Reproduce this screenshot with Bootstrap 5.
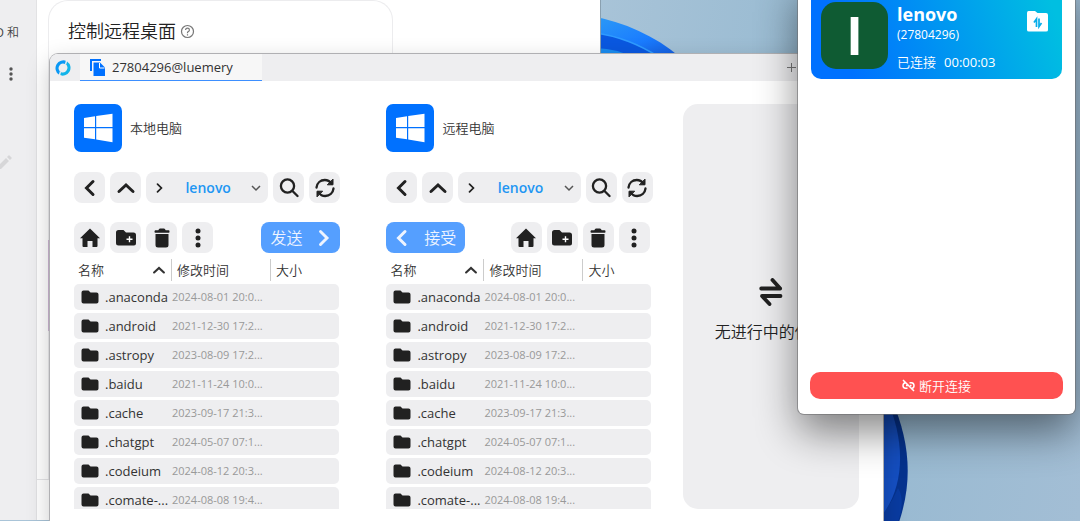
<!DOCTYPE html>
<html lang="zh-CN">
<head>
<meta charset="utf-8">
<meta name="viewport" content="width=device-width, initial-scale=1">
<title>27804296@luemery</title>
<link href="https://cdn.jsdelivr.net/npm/bootstrap@5.3.0/dist/css/bootstrap.min.css" rel="stylesheet">
<style>
  :root { --ink: #212121; --soft: #eeeef0; --brand: #0071ff; }
  body { font-family: "Open Sans", "Noto Sans CJK SC DemiLight", "Noto Sans CJK SC", sans-serif; font-size: 13px; line-height: 20px; color: #333; overflow: hidden; }
  button { font-family: inherit; }
  svg { display: block; flex: none; }
  .desktop { height: 100vh; background: linear-gradient(100deg, #a9c4d8 50%, #94b8d0 75%, #a3bed5 100%); }
  .wallpaper { position: absolute; inset: 0; width: 100%; height: 100%; }

  /* windows on the desktop */
  .win { position: absolute; background: #fff; }
  .win-home { left: 0; top: 0; bottom: 1px; width: 601px; border-right: 1px solid #8aa0b0; }
  .win-files { left: 50px; right: 197px; top: 54px; bottom: -12px; border-radius: 8px 8px 0 0; box-shadow: 0 0 0 1px #b0b0b3, 0 8px 24px rgba(0,0,0,.22); }
  .win-session { right: 5px; top: -20px; bottom: 107px; width: 277px; border-radius: 0 0 6px 6px; padding: 12px 12px 15px; box-shadow: 0 0 0 1px rgba(110,110,112,.6), 0 18px 42px rgba(0,0,0,.48); }

  .side { width: 37px; background: var(--soft); border-right: 1px solid #e2e2e4; padding-top: 23px; color: #444; }
  .side-text { width: 19px; direction: rtl; white-space: nowrap; overflow: hidden; font-size: 12px; }
  .side-pen { margin-top: 74px; margin-left: -2px; }
  .home-card { margin: 0 207px 0 11px; border: 1px solid #ececee; border-bottom: 0; border-radius: 20px 20px 0 0; padding: 18px 19px 0; }
  .home-title { font-size: 18px; line-height: 24px; font-weight: 400; color: #222; }
  .home-tile { height: 91px; margin: 197px -20px 0; background: #cdb6d2; }
  .home-foot { height: 41px; border-top: 1px solid #e4e4e6; }

  .tabs-bar { height: 27px; background: var(--soft); border-radius: 8px 8px 0 0; padding-left: 5px; }
  .tab-item { width: 182px; height: 27px; background: #f7f7f7; border: 0; border-bottom: 1px solid #3d8fff; padding: 0 10px; margin-left: 9px; gap: 7px; color: #333; }
  .tab-add { border: 0; background: none; padding: 0; margin-right: 87px; }
  .panes { display: grid; grid-template-columns: 3fr 3fr 2fr; min-height: 0; padding: 23px 0 24px; }
  .pane { padding: 0 22px 0 24px; min-width: 0; min-height: 0; overflow: hidden; }
  .os-tile { width: 48px; height: 48px; border-radius: 7px; background: var(--brand); }
  .tool { width: 31px; height: 31px; border: 0; border-radius: 8px; background: var(--soft); padding: 0; color: var(--ink); display: flex; align-items: center; justify-content: center; }
  .tools { gap: 5px; }
  .tools-nav { margin-top: 20px; }
  .tools-act { margin-top: 19px; }
  .tools-remote { padding-right: 3px; }
  .path-box { height: 31px; border-radius: 8px; background: var(--soft); padding: 0 7px; color: var(--ink); }
  .path-link { color: #2196f3; font-weight: 600; font-size: 14px; text-decoration: none; }
  .send { width: 79px; height: 31px; border: 0; border-radius: 8px; background: #559fff; color: #eef4ff; font-size: 16px; padding: 0 7px 0 9px; }
  .send-back { padding: 0 9px 0 6px; }

  .files { table-layout: fixed; width: 265px; border-collapse: separate; border-spacing: 0 3px; margin: 3px 0 0; }
  .files th { height: 22px; padding: 0 5px; font-weight: 400; border-left: 1px solid #ccc; color: #333; line-height: 20px; }
  .files th:first-child { border-left: 0; padding-left: 4px; }
  .files td { height: 26px; padding: 0; background: var(--soft); line-height: 20px; white-space: nowrap; }
  .files td:first-child { border-radius: 5px 0 0 5px; padding-left: 7px; }
  .files td:last-child { border-radius: 0 5px 5px 0; }
  .files .when { font-size: 11px; color: #999; padding-left: 1px; }
  .entry { gap: 6px; }
  .sort { border: 0; background: none; padding: 0; width: 100%; color: inherit; }
  .w-name { width: 97px; } .w-date { width: 99px; }

  .transfers { margin: 0 24px 0 8px; border-radius: 15px; background: var(--soft); font-size: 16px; line-height: 24px; color: #222; gap: 14px; padding-top: 8px; }

  .peer { height: 87px; border-radius: 0 0 10px 10px; margin: 0 1px; padding: 10px; background: linear-gradient(70deg, #0071ff 15%, #00bfe1 95%); color: #fff; }
  .avatar { width: 67px; height: 67px; border-radius: 15px; background: #0f5b33; font-size: 51px; line-height: 67px; font-weight: 700; }
  .peer-text { margin-left: 9px; }
  .peer-name { font-size: 18px; line-height: 24px; font-weight: 700; }
  .peer-id { font-size: 12px; line-height: 18px; }
  .peer-state { font-size: 13px; line-height: 20px; margin-top: 8px; }
  .files-btn { border: 0; background: none; padding: 0; margin: 9px 4px 0 auto; }
  .hangup { height: 27px; border: 0; border-radius: 10px; background: #ff5151; color: #fff; }
</style>
</head>
<body>
<svg class="d-none">
  <symbol id="i-win" viewBox="0 0 30 30"><path fill="#fff" d="M1 5 12 3.300V14H1zM13.200 3.100 29.500.7V14H13.200zM1 15.300H12V26.200L1 24.700zM13.200 15.300H29.500V29.200L13.200 26.500z"/></symbol>
  <symbol id="i-left" viewBox="0 0 20 20"><path d="M13 3.500 6.500 10l6.500 6.500" fill="none" stroke="currentColor" stroke-width="3" stroke-linecap="round"/></symbol>
  <symbol id="i-right" viewBox="0 0 20 20"><path d="m7.500 3.500 6.500 6.500-6.500 6.500" fill="none" stroke="currentColor" stroke-width="2.900" stroke-linecap="round"/></symbol>
  <symbol id="i-up" viewBox="0 0 20 20"><path d="m3 13.500 7-6.500 7 6.500" fill="none" stroke="currentColor" stroke-width="3" stroke-linecap="round"/></symbol>
  <symbol id="i-down" viewBox="0 0 10 10"><path d="m1 3 4 4 4-4" fill="none" stroke="#555" stroke-width="1.500"/></symbol>
  <symbol id="i-search" viewBox="0 0 20 20"><g fill="none" stroke="currentColor" stroke-width="2.300" stroke-linecap="round"><circle cx="8.500" cy="8" r="6.600"/><path d="m13.500 13 5 5"/></g></symbol>
  <symbol id="i-sync" viewBox="0 0 20 20"><g fill="none" stroke="currentColor" stroke-width="2.300" stroke-linecap="round" stroke-linejoin="round"><path d="M1.500 9.500C2 5 5.500 2 9.800 2c3 0 5 1.300 6.700 3.700M18.500 10.500C18 15 14.500 18 10.200 18c-3 0-5-1.300-6.700-3.700"/><path d="M18 1.500v5.300h-5.300zM2 18.500v-5.300h5.300z" fill="currentColor" stroke-width="1"/></g></symbol>
  <symbol id="i-home" viewBox="0 0 20 20"><path fill="currentColor" d="M10 .5 20 10.200h-2.500V18q0 1-1 1h-4v-6h-5v6h-4q-1 0-1-1v-7.800H0z"/></symbol>
  <symbol id="i-newdir" viewBox="0 0 20 16"><path fill="currentColor" d="M2.500 0h5l2.500 2.500h7.500Q20 2.500 20 5v8.500q0 2-2 2H2.500q-2.500 0-2.500-2.500V2.500Q0 0 2.500 0z"/><path d="M13.500 6.300v6M10.500 9.300h6" stroke="#fff" stroke-width="1.400"/></symbol>
  <symbol id="i-trash" viewBox="0 0 16 20"><path fill="currentColor" d="M1.300 2.200h3Q5 .5 6 .5h4q1 0 1.700 1.700h3q.8 0 .8 1.400t-.8 1.200H1.300q-.8 0-.8-1.200t.8-1.400zM1.500 6h13v11q0 2.500-2.500 2.500H4q-2.500 0-2.500-2.500z"/></symbol>
  <symbol id="i-dots" viewBox="0 0 6 20"><g fill="currentColor"><circle cx="3" cy="3" r="2.500"/><circle cx="3" cy="10" r="2.500"/><circle cx="3" cy="17" r="2.500"/></g></symbol>
  <symbol id="i-dir" viewBox="0 0 18 14"><path fill="#212121" d="M2.500.5h5L9.500 2.500H15.500q2 0 2 2V11.500q0 2-2 2H2.500q-2 0-2-2V2.500q0-2 2-2z"/></symbol>
</svg>

<main class="desktop position-relative overflow-hidden">
  <svg class="wallpaper" viewBox="0 0 1080 521" preserveAspectRatio="none" aria-hidden="true">
    <defs><linearGradient id="petal" x1="0" y1="0" x2="1" y2="1"><stop offset="0" stop-color="#2d9cf5"/><stop offset=".6" stop-color="#1a7cff"/><stop offset="1" stop-color="#1458d8"/></linearGradient></defs>
    <path fill="url(#petal)" d="M590 16C625 22 655 36 680 57H590z"/>
    <path fill="#0a58e0" d="M590 32C620 36 640 45 659 57H590z"/>
    <path d="M590 32C620 36 640 45 659 57" fill="none" stroke="#2f9bff" stroke-width="1.500"/>
    <path fill="#1b8cf0" d="M590 48C605 48 620 50 632 57H590z"/>
    <path fill="#06338f" d="M880 400h12C909 440 914 480 898 525H880z"/>
    <path fill="#1550c4" d="M880 400h7C905 440 906 487 880 518z"/>
    <path fill="#0c44b4" d="M880 518Q892 503 898 488 906 500 897 525H880z" opacity=".5"/>
  </svg>

  <section class="win win-home d-flex">
    <aside class="side flex-shrink-0">
      <div class="side-text">ID 和</div>
      <svg class="ms-2 mt-4" width="6" height="14" viewBox="0 0 6 14" fill="#555"><circle cx="3" cy="2" r="1.700"/><circle cx="3" cy="7" r="1.700"/><circle cx="3" cy="12" r="1.700"/></svg>
      <svg class="side-pen" width="14" height="14" viewBox="0 0 14 14" fill="#d6d6d8"><path d="M0 11 8 3l3 3-8 8H0zM9 2l1.500-1.500q.5-.5 1 0l2 2q.5.500 0 1L12 5z"/></svg>
    </aside>
    <div class="flex-grow-1 d-flex flex-column">
      <div class="home-card flex-grow-1">
        <h1 class="home-title d-flex align-items-center gap-1 mb-0">控制远程桌面
          <svg width="15" height="15" viewBox="0 0 15 15" fill="none" stroke="#777" stroke-width="1.200"><circle cx="7.500" cy="7.500" r="6"/><path d="M5.600 6.100q0-2 1.900-2t1.900 1.800q0 1-1.100 1.700t-.8 1.600M7.500 10.300v1.300"/></svg>
        </h1>
        <div class="home-tile"></div>
      </div>
      <div class="home-foot"></div>
    </div>
  </section>

  <section class="win win-files d-flex flex-column">
    <header class="tabs-bar d-flex align-items-center flex-shrink-0">
      <svg width="16" height="16" viewBox="0 0 16 16" fill="none" stroke-width="3.200"><path d="M4.800 13.300A6.200 6.200 0 0 1 11 2.600" stroke="#0a98f5"/><path d="M11.200 2.700A6.200 6.200 0 0 1 5 13.400" stroke="#12b4ea"/><path d="m11.500.5-.9 4M4.500 15.500l.9-4" stroke="#eeeef0" stroke-width="1.300"/></svg>
      <button class="tab-item d-flex align-items-center" type="button">
        <svg width="15" height="17" viewBox="0 0 15 17" fill="#0071ff"><path d="M0 0h11v2H2v10H0z"/><path d="M3.500 3.500H10l5 5V17H3.500z"/><path d="M9.500 4v5h5" fill="none" stroke="#fff"/></svg>
        <span>27804296@luemery</span>
      </button>
      <button class="tab-add ms-auto" type="button" aria-label="+"><svg width="9" height="9" viewBox="0 0 9 9" stroke="#777"><path d="M4.500 0v9M0 4.500h9"/></svg></button>
    </header>

    <div class="panes flex-grow-1">
      <section class="pane">
        <div class="d-flex align-items-center gap-2"><span class="os-tile d-flex align-items-center justify-content-center"><svg width="30" height="30"><use href="#i-win"/></svg></span><span>本地电脑</span></div>
        <nav class="tools tools-nav d-flex">
          <button class="tool" type="button"><svg width="20" height="20"><use href="#i-left"/></svg></button>
          <button class="tool" type="button"><svg width="20" height="20"><use href="#i-up"/></svg></button>
          <div class="path-box d-flex align-items-center justify-content-between flex-grow-1"><svg width="12" height="12"><use href="#i-right"/></svg><a class="path-link" href="#">lenovo</a><svg width="10" height="10"><use href="#i-down"/></svg></div>
          <button class="tool" type="button"><svg width="20" height="20"><use href="#i-search"/></svg></button>
          <button class="tool" type="button"><svg width="20" height="20"><use href="#i-sync"/></svg></button>
        </nav>
        <div class="tools tools-act d-flex">
          <button class="tool" type="button"><svg width="20" height="20"><use href="#i-home"/></svg></button>
          <button class="tool" type="button"><svg width="20" height="16"><use href="#i-newdir"/></svg></button>
          <button class="tool" type="button"><svg width="16" height="20"><use href="#i-trash"/></svg></button>
          <button class="tool" type="button"><svg width="6" height="20"><use href="#i-dots"/></svg></button>
          <button class="send ms-auto d-flex align-items-center justify-content-between" type="button"><span>发送</span><svg width="20" height="20"><use href="#i-right"/></svg></button>
        </div>
        <table class="files">
          <thead><tr><th class="w-name"><button class="sort d-flex align-items-center justify-content-between" type="button">名称<svg width="14" height="14"><use href="#i-up"/></svg></button></th><th class="w-date">修改时间</th><th>大小</th></tr></thead>
          <tbody>
            <tr><td><span class="entry d-flex align-items-center"><svg width="18" height="14"><use href="#i-dir"/></svg>.anaconda</span></td><td class="when">2024-08-01 20:0...</td><td></td></tr>
            <tr><td><span class="entry d-flex align-items-center"><svg width="18" height="14"><use href="#i-dir"/></svg>.android</span></td><td class="when">2021-12-30 17:2...</td><td></td></tr>
            <tr><td><span class="entry d-flex align-items-center"><svg width="18" height="14"><use href="#i-dir"/></svg>.astropy</span></td><td class="when">2023-08-09 17:2...</td><td></td></tr>
            <tr><td><span class="entry d-flex align-items-center"><svg width="18" height="14"><use href="#i-dir"/></svg>.baidu</span></td><td class="when">2021-11-24 10:0...</td><td></td></tr>
            <tr><td><span class="entry d-flex align-items-center"><svg width="18" height="14"><use href="#i-dir"/></svg>.cache</span></td><td class="when">2023-09-17 21:3...</td><td></td></tr>
            <tr><td><span class="entry d-flex align-items-center"><svg width="18" height="14"><use href="#i-dir"/></svg>.chatgpt</span></td><td class="when">2024-05-07 07:1...</td><td></td></tr>
            <tr><td><span class="entry d-flex align-items-center"><svg width="18" height="14"><use href="#i-dir"/></svg>.codeium</span></td><td class="when">2024-08-12 20:3...</td><td></td></tr>
            <tr><td><span class="entry d-flex align-items-center"><svg width="18" height="14"><use href="#i-dir"/></svg>.comate-...</span></td><td class="when">2024-08-08 19:4...</td><td></td></tr>
          </tbody>
        </table>
      </section>

      <section class="pane">
        <div class="d-flex align-items-center gap-2"><span class="os-tile d-flex align-items-center justify-content-center"><svg width="30" height="30"><use href="#i-win"/></svg></span><span>远程电脑</span></div>
        <nav class="tools tools-nav d-flex">
          <button class="tool" type="button"><svg width="20" height="20"><use href="#i-left"/></svg></button>
          <button class="tool" type="button"><svg width="20" height="20"><use href="#i-up"/></svg></button>
          <div class="path-box d-flex align-items-center justify-content-between flex-grow-1"><svg width="12" height="12"><use href="#i-right"/></svg><a class="path-link" href="#">lenovo</a><svg width="10" height="10"><use href="#i-down"/></svg></div>
          <button class="tool" type="button"><svg width="20" height="20"><use href="#i-search"/></svg></button>
          <button class="tool" type="button"><svg width="20" height="20"><use href="#i-sync"/></svg></button>
        </nav>
        <div class="tools tools-act tools-remote d-flex">
          <button class="send send-back me-auto d-flex align-items-center justify-content-between" type="button"><svg width="20" height="20"><use href="#i-left"/></svg><span>接受</span></button>
          <button class="tool" type="button"><svg width="20" height="20"><use href="#i-home"/></svg></button>
          <button class="tool" type="button"><svg width="20" height="16"><use href="#i-newdir"/></svg></button>
          <button class="tool" type="button"><svg width="16" height="20"><use href="#i-trash"/></svg></button>
          <button class="tool" type="button"><svg width="6" height="20"><use href="#i-dots"/></svg></button>
        </div>
        <table class="files">
          <thead><tr><th class="w-name"><button class="sort d-flex align-items-center justify-content-between" type="button">名称<svg width="14" height="14"><use href="#i-up"/></svg></button></th><th class="w-date">修改时间</th><th>大小</th></tr></thead>
          <tbody>
            <tr><td><span class="entry d-flex align-items-center"><svg width="18" height="14"><use href="#i-dir"/></svg>.anaconda</span></td><td class="when">2024-08-01 20:0...</td><td></td></tr>
            <tr><td><span class="entry d-flex align-items-center"><svg width="18" height="14"><use href="#i-dir"/></svg>.android</span></td><td class="when">2021-12-30 17:2...</td><td></td></tr>
            <tr><td><span class="entry d-flex align-items-center"><svg width="18" height="14"><use href="#i-dir"/></svg>.astropy</span></td><td class="when">2023-08-09 17:2...</td><td></td></tr>
            <tr><td><span class="entry d-flex align-items-center"><svg width="18" height="14"><use href="#i-dir"/></svg>.baidu</span></td><td class="when">2021-11-24 10:0...</td><td></td></tr>
            <tr><td><span class="entry d-flex align-items-center"><svg width="18" height="14"><use href="#i-dir"/></svg>.cache</span></td><td class="when">2023-09-17 21:3...</td><td></td></tr>
            <tr><td><span class="entry d-flex align-items-center"><svg width="18" height="14"><use href="#i-dir"/></svg>.chatgpt</span></td><td class="when">2024-05-07 07:1...</td><td></td></tr>
            <tr><td><span class="entry d-flex align-items-center"><svg width="18" height="14"><use href="#i-dir"/></svg>.codeium</span></td><td class="when">2024-08-12 20:3...</td><td></td></tr>
            <tr><td><span class="entry d-flex align-items-center"><svg width="18" height="14"><use href="#i-dir"/></svg>.comate-...</span></td><td class="when">2024-08-08 19:4...</td><td></td></tr>
          </tbody>
        </table>
      </section>

      <section class="transfers d-flex flex-column align-items-center justify-content-center">
        <svg width="24" height="28" viewBox="0 0 24 28" fill="none" stroke="#212121" stroke-width="3.800" stroke-linecap="round" stroke-linejoin="round"><path d="M2.200 10.500h19L13.500 2M21.500 18H3l7.500 8"/></svg>
        <span>无进行中的传输</span>
      </section>
    </div>
  </section>

  <section class="win win-session d-flex flex-column justify-content-between">
    <div class="peer d-flex">
      <div class="avatar text-center flex-shrink-0">l</div>
      <div class="peer-text">
        <div class="peer-name">lenovo</div>
        <div class="peer-id">(27804296)</div>
        <div class="peer-state"><span class="me-2">已连接</span>00:00:03</div>
      </div>
      <button class="files-btn align-self-start" type="button"><svg width="21" height="21" viewBox="0 0 21 21"><path fill="#fff" d="M1.500 0H8l2.500 2H19q2 0 2 2v15q0 1.500-2 1.500H2Q0 20.500 0 19V2Q0 0 1.500 0z"/><path d="M9.500 16V8L7 11.500M12 7.500v8l2.500-3.500" fill="none" stroke="#08aeea" stroke-width="1.700"/></svg></button>
    </div>
    <button class="hangup d-flex align-items-center justify-content-center gap-1" type="button">
      <svg width="13" height="13" viewBox="0 0 13 13" fill="none" stroke="#fff" stroke-width="1.500"><path d="m1 1 11 11M3.500 3.700Q1 4 1 6.500t2.500 2.800H5.500M7.500 3.700H9.500Q12 4 12 6.500T10 9.300M4 6.500h2.500M8 6.500h1.500"/></svg>
      <span>断开连接</span>
    </button>
  </section>
</main>
<script src="https://cdn.jsdelivr.net/npm/bootstrap@5.3.0/dist/js/bootstrap.bundle.min.js"></script>
</body>
</html>
